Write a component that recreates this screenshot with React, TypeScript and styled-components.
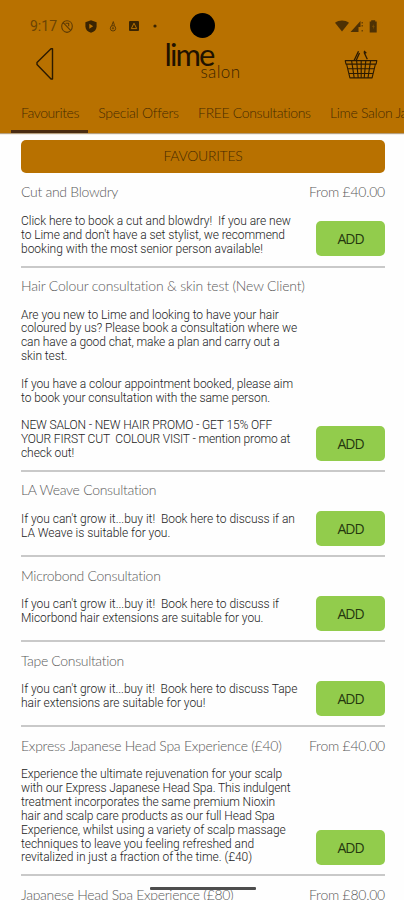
import React from 'react';
import styled, { createGlobalStyle } from 'styled-components';

const GlobalStyle = createGlobalStyle`
  * { box-sizing: border-box; }
  body { margin: 0; background: #fefefe; overflow: hidden; }
`;

const Screen = styled.div`
  position: relative;
  display: flex;
  flex-direction: column;
  width: 404px;
  height: 900px;
  overflow: hidden;
  background: #fefefe;
  font-family: Lato, 'Open Sans', sans-serif;
  font-weight: 300;
`;

const Header = styled.header`
  display: flex;
  flex-direction: column;
  flex: none;
  height: 133px;
  background: #b87100;
  box-shadow: 0 1px 1px rgba(120, 80, 20, 0.55);
`;

const StatusBar = styled.div`
  display: flex;
  flex: none;
  align-items: center;
  justify-content: space-between;
  height: 40px;
  padding: 12px 26px 0 30px;
  color: #5c3a04;
`;

const StatusGroup = styled.div<{ $gap: number }>`
  display: flex;
  align-items: center;
  gap: ${(p) => p.$gap}px;
`;

const Clock = styled.span`
  font: 400 14px/16px Roboto, sans-serif;
  letter-spacing: 0;
  margin-right: -8px;
  color: #6b4404;
`;

const CameraHole = styled.div`
  position: absolute;
  top: 13px;
  left: 190px;
  width: 25px;
  height: 25px;
  border-radius: 50%;
  background: #000;
`;

const TitleBar = styled.div`
  display: flex;
  flex: none;
  align-items: flex-start;
  justify-content: space-between;
  height: 50px;
  padding: 0 26px 0 35px;
`;

const IconButton = styled.button<{ $top: number }>`
  display: flex;
  padding: 0;
  margin-top: ${(p) => p.$top}px;
  border: 0;
  background: none;
  color: #2b1a00;
`;

const Logo = styled.div`
  display: flex;
  flex-direction: column;
  width: 76px;
  margin-left: 6px;
  color: #1f1200;
`;

const LogoMain = styled.span`
  font-size: 31px;
  line-height: 28px;
  font-weight: 400;
  letter-spacing: -1.9px;
`;

const LogoSub = styled.span`
  align-self: flex-end;
  margin-top: -6px;
  font-size: 17px;
  line-height: 20px;
  letter-spacing: 0.4px;
  color: #3a2300;
`;

const Tabs = styled.nav`
  display: flex;
  flex: 1;
  padding-left: 11px;
  overflow: hidden;
`;

const Tab = styled.span<{ $active?: boolean; $tracking?: number }>`
  flex: none;
  padding: 12.5px 9.3px 0 10px;
  border-bottom: 3px solid ${(p) => (p.$active ? '#4a2c12' : 'transparent')};
  font-size: 14px;
  line-height: 20px;
  letter-spacing: ${(p) => p.$tracking ?? -0.35}px;
  white-space: nowrap;
  color: #462b02;
`;

const Content = styled.main`
  display: flex;
  flex-direction: column;
  padding: 6.5px 19px 0 21px;
`;

const Banner = styled.div`
  flex: none;
  height: 33px;
  margin-bottom: 1.4px;
  border-radius: 5px;
  background: #b87100;
  color: #462a00;
  font-size: 14px;
  line-height: 32px;
  letter-spacing: -0.27px;
  text-align: center;
`;

const Service = styled.section`
  flex: none;
  border-bottom: 2px solid #c9c9c9;
`;

const ServiceHead = styled.div`
  display: flex;
  justify-content: space-between;
  height: 39px;
  padding-top: 8.5px;
  line-height: 20px;
  font-size: 14px;
  color: #5a5a5a;
`;

const Label = styled.span<{ $tracking?: number }>`
  letter-spacing: ${(p) => p.$tracking ?? -0.29}px;
  white-space: nowrap;
`;

const ServiceBody = styled.div`
  display: flex;
  align-items: flex-end;
  justify-content: space-between;
  padding-bottom: 9.15px;
`;

const Description = styled.div`
  align-self: flex-start;
  display: flex;
  flex-direction: column;
  padding-top: 2px;
  font: 300 12px/13.85px Roboto, sans-serif;
  color: #222;
`;

const Line = styled.span<{ $tracking: number }>`
  height: 13.85px;
  letter-spacing: ${(p) => p.$tracking}px;
  white-space: pre;
`;

const AddButton = styled.button`
  flex: none;
  width: 69px;
  height: 35px;
  padding: 0;
  border: 0;
  border-radius: 5px;
  background: #92cc4c;
  color: #25380f;
  font: 400 14px/35px 'Open Sans', sans-serif;
  letter-spacing: -1px;
`;

const HomeIndicator = styled.div`
  position: absolute;
  left: 150px;
  top: 887px;
  width: 106px;
  height: 3px;
  border-radius: 1px;
  background: #4d4d4d;
`;

type TextLine = [text: string, tracking: number];

interface ServiceItem {
  name: string;
  tracking?: number;
  price?: string;
  lines: TextLine[];
}

const services: ServiceItem[] = [
  {
    name: 'Cut and Blowdry',
    price: 'From £40.00',
    lines: [
      ['Click here to book a cut and blowdry!  If you are new', -0.03],
      ["to Lime and don't have a set stylist, we recommend", -0.07],
      ['booking with the most senior person available!', -0.02],
    ],
  },
  {
    name: 'Hair Colour consultation & skin test (New Client)',
    tracking: -0.17,
    lines: [
      ['Are you new to Lime and looking to have your hair', -0.04],
      ['coloured by us? Please book a consultation where we', -0.06],
      ['can have a good chat, make a plan and carry out a', -0.08],
      ['skin test.', -0.07],
      ['', 0],
      ['If you have a colour appointment booked, please aim', -0.075],
      ['to book your consultation with the same person.', -0.07],
      ['', 0],
      ['NEW SALON - NEW HAIR PROMO - GET 15% OFF', -0.15],
      ['YOUR FIRST CUT  COLOUR VISIT - mention promo at', -0.145],
      ['check out!', -0.07],
    ],
  },
  {
    name: 'LA Weave Consultation',
    lines: [
      ["If you can't grow it...buy it!  Book here to discuss if an", -0.03],
      ['LA Weave is suitable for you.', -0.03],
    ],
  },
  {
    name: 'Microbond Consultation',
    tracking: -0.29,
    lines: [
      ["If you can't grow it...buy it!  Book here to discuss if", -0.03],
      ['Micorbond hair extensions are suitable for you.', -0.06],
    ],
  },
  {
    name: 'Tape Consultation',
    tracking: -0.34,
    lines: [
      ["If you can't grow it...buy it!  Book here to discuss Tape", -0.04],
      ['hair extensions are suitable for you!', -0.03],
    ],
  },
  {
    name: 'Express Japanese Head Spa Experience (£40)',
    tracking: -0.27,
    price: 'From £40.00',
    lines: [
      ['Experience the ultimate rejuvenation for your scalp', -0.07],
      ['with our Express Japanese Head Spa. This indulgent', -0.1],
      ['treatment incorporates the same premium Nioxin', -0.1],
      ['hair and scalp care products as our full Head Spa', -0.07],
      ['Experience, whilst using a variety of scalp massage', -0.07],
      ['techniques to leave you feeling refreshed and', -0.07],
      ['revitalized in just a fraction of the time. (£40)', -0.04],
    ],
  },
  { name: 'Japanese Head Spa Experience (£80)', price: 'From £80.00', lines: [] },
];

const BlockedIcon = () => (
  <svg width="12" height="13" viewBox="0 0 12 13" fill="none" stroke="currentColor" strokeWidth="1.1">
    <path d="M6 .8C9 .8 11.300 3 11.300 6.200S9 12 6 12.400C3 12 .7 9.400.7 6.200S3 .8 6 .8z M2.200 2.700l7.400 7.700M4.500 3.300h3.200v3" />
  </svg>
);

const ShieldIcon = () => (
  <svg width="12" height="13" viewBox="0 0 12 13">
    <path d="M6 .2 11.600 2.300v4.200c0 3-2.200 5.300-5.600 6.300C2.600 11.800.4 9.500.4 6.500V2.300z" fill="#3a2402" />
    <path d="M4.300 3.800 8.200 6.300 4.300 8.800z" fill="#b87100" />
  </svg>
);

const DropIcon = () => (
  <svg width="8" height="11" viewBox="0 0 8 11" fill="none" stroke="currentColor" strokeWidth="1">
    <circle cx="4" cy="7.300" r="2.700" />
    <circle cx="4" cy="7.300" r=".7" />
    <path d="M2.700 4.800 4.300.6l1.200 4" />
  </svg>
);

const SquareIcon = () => (
  <svg width="10" height="10" viewBox="0 0 10 10">
    <rect width="10" height="10" rx="1" fill="#3a2402" />
    <path d="M5 2.200 7.700 7.600H2.300z" fill="none" stroke="#b87100" />
  </svg>
);

const DotIcon = () => (
  <svg width="6" height="4" viewBox="0 0 6 4">
    <circle cx="4" cy="2" r="1.600" fill="#3a2402" />
  </svg>
);

const SignalIcons = () => (
  <svg width="43" height="13" viewBox="0 0 43 13" fill="#4e3104">
    <path d="M0 2.800C4.200-.4 9.800-.4 14 2.800L7 11.500z" />
    <path d="M25.500 1v6h-2v5H15.500z" />
    <path d="M26.500 2h1.500v1.500h-1.500zM26.500 5h1.500v1.500h-1.500zM26.500 10h1.500v1.500h-1.500z" opacity=".7" />
    <path d="M37 .3h4v1.200h1.500V12.500h-7V1.500H37z" transform="translate(-.8)" />
    <path d="M38.700 4 37 7h1.200v2.500L39.700 6h-1z" fill="#7a4c02" />
  </svg>
);

const BackIcon = () => (
  <svg width="20" height="34" viewBox="0 0 20 34" fill="none" stroke="currentColor" strokeWidth="1.400" strokeLinejoin="round">
    <path d="M17.500 1.800V32H16L2 17.600v-2L16 1.800z" />
  </svg>
);

const BasketIcon = () => (
  <svg width="34" height="30" viewBox="0 0 34 31" preserveAspectRatio="none" fill="none" stroke="currentColor" strokeWidth="1.100" strokeLinejoin="round">
    <path d="M1.200 11h31.600l-.7 3.600H2z" />
    <path d="M2.600 14.600 5.900 28.800h22.200l3.300-14.200M3.400 19.400h27.200M4.600 24.200h24.800" />
    <path d="M7.600 11l2.600 17.800M12.600 11l1.600 17.800M17.200 11v17.800M21.800 11l-1.600 17.800M26.600 11l-2.600 17.800" />
    <path d="M10.200 10.500 14.500 1.200M12 11 15.500 3M20 1l2.300 2.300M20 2.300 23.300 9.500" strokeWidth="1.300" />
  </svg>
);

export default function App() {
  return (
    <Screen>
      <GlobalStyle />
      <Header>
        <StatusBar>
          <StatusGroup $gap={12}>
            <Clock>9:17</Clock>
            <BlockedIcon />
            <ShieldIcon />
            <DropIcon />
            <SquareIcon />
            <DotIcon />
          </StatusGroup>
          <StatusGroup $gap={0}>
            <SignalIcons />
          </StatusGroup>
        </StatusBar>
        <CameraHole />
        <TitleBar>
          <IconButton $top={7} aria-label="Back">
            <BackIcon />
          </IconButton>
          <Logo>
            <LogoMain>lime</LogoMain>
            <LogoSub>salon</LogoSub>
          </Logo>
          <IconButton $top={9.5} aria-label="Basket">
            <BasketIcon />
          </IconButton>
        </TitleBar>
        <Tabs>
          <Tab $active $tracking={-0.4}>Favourites</Tab>
          <Tab $tracking={-0.26}>Special Offers</Tab>
          <Tab>FREE Consultations</Tab>
          <Tab $tracking={-0.3}>Lime Salon Japanese Head Spa</Tab>
        </Tabs>
      </Header>
      <Content>
        <Banner>FAVOURITES</Banner>
        {services.map((service) => (
          <Service key={service.name}>
            <ServiceHead>
              <Label $tracking={service.tracking}>{service.name}</Label>
              {service.price && <Label $tracking={-0.24}>{service.price}</Label>}
            </ServiceHead>
            <ServiceBody>
              <Description>
                {service.lines.map(([text, tracking], i) => (
                  <Line key={i} $tracking={tracking}>
                    {text}
                  </Line>
                ))}
              </Description>
              <AddButton>ADD</AddButton>
            </ServiceBody>
          </Service>
        ))}
      </Content>
      <HomeIndicator />
    </Screen>
  );
}
